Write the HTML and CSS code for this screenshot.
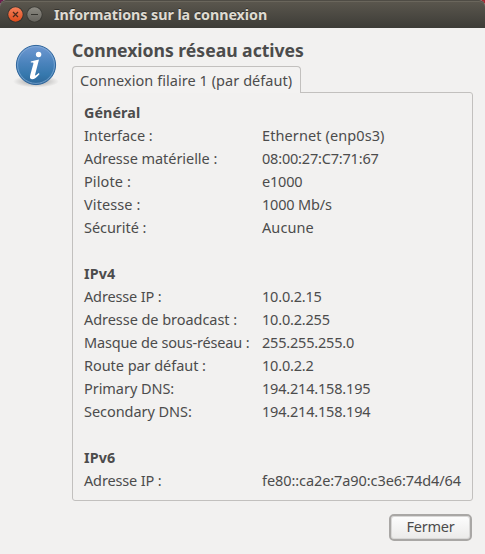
FILE: index.html
```html
<!DOCTYPE html>
<html lang="fr">
<head>
<meta charset="utf-8">
<title>Informations sur la connexion</title>
<link rel="stylesheet" href="styles.css">
</head>
<body>
<div class="window">
  <header class="titlebar">
    <svg class="controls" width="44" height="28" viewBox="0 0 44 28">
      <defs>
        <linearGradient id="close" x1="0" y1="0" x2="0" y2="1"><stop offset="0" stop-color="#f4805a"/><stop offset="1" stop-color="#df4c1c"/></linearGradient>
        <linearGradient id="mini" x1="0" y1="0" x2="0" y2="1"><stop offset="0" stop-color="#8c8a82"/><stop offset="1" stop-color="#66645e"/></linearGradient>
      </defs>
      <circle cx="15.5" cy="14.5" r="8.1" fill="#35342f"/>
      <circle cx="15.5" cy="14.5" r="7.2" fill="url(#close)"/>
      <path d="M13 12l5 5M18 12l-5 5" stroke="#4a2a1c" stroke-width="1.2"/>
      <circle cx="34.5" cy="14.5" r="8.1" fill="#3a3934"/>
      <circle cx="34.5" cy="14.5" r="7.2" fill="url(#mini)"/>
      <path d="M31 14.5h7" stroke="#35342f" stroke-width="1.2"/>
    </svg>
    <h1 class="caption">Informations sur la connexion</h1>
  </header>
  <main class="content">
    <svg class="info" width="46" height="46" viewBox="0 0 46 46">
      <defs>
        <linearGradient id="ball" x1="0" y1="0" x2="0" y2="1"><stop offset="0" stop-color="#7099d2"/><stop offset=".45" stop-color="#4a83bc"/><stop offset=".75" stop-color="#3678ad"/><stop offset="1" stop-color="#2d6698"/></linearGradient>
        <radialGradient id="shade"><stop offset="0" stop-color="#000" stop-opacity=".35"/><stop offset="1" stop-color="#000" stop-opacity="0"/></radialGradient>
      </defs>
      <ellipse cx="23" cy="38.5" rx="23" ry="6" fill="url(#shade)"/>
      <circle cx="23" cy="22" r="19.6" fill="url(#ball)" stroke="#2e659c" stroke-width="1"/>
      <circle cx="23" cy="22" r="18.4" fill="none" stroke="#8db4dc" stroke-opacity=".65" stroke-width="1"/>
      <circle cx="25.6" cy="11.5" r="2.7" fill="#fff"/>
      <path d="M17.8 18.4C20.2 17.6 23 17 26 16.4L22.2 31.2C21.7 33.2 22.8 32.8 25.7 30L26.6 31C23.6 34.7 21.2 36.3 19 36.2C16.7 36.1 16.7 34.1 17.4 31.6L20.3 21C20.8 19.4 20 19.3 17.8 19.6Z" fill="#fff"/>
    </svg>
    <section class="details">
      <h2 class="heading">Connexions réseau actives</h2>
      <div class="tab">Connexion filaire 1 (par défaut)</div>
      <dl class="panel">
        <dt class="group">Général</dt>
        <dt>Interface :</dt><dd class="wide">Ethernet (enp0s3)</dd>
        <dt>Adresse matérielle :</dt><dd>08:00:27:C7:71:67</dd>
        <dt class="wide">Pilote :</dt><dd>e1000</dd>
        <dt class="wide">Vitesse :</dt><dd>1000 Mb/s</dd>
        <dt>Sécurité :</dt><dd class="wide">Aucune</dd>
        <dt class="group spaced">IPv4</dt>
        <dt class="tight">Adresse IP :</dt><dd>10.0.2.15</dd>
        <dt>Adresse de broadcast :</dt><dd>10.0.2.255</dd>
        <dt class="tight">Masque de sous-réseau :</dt><dd>255.255.255.0</dd>
        <dt>Route par défaut :</dt><dd>10.0.2.2</dd>
        <dt>Primary DNS:</dt><dd>194.214.158.195</dd>
        <dt>Secondary DNS:</dt><dd>194.214.158.194</dd>
        <dt class="group spaced">IPv6</dt>
        <dt class="tight">Adresse IP :</dt><dd class="address">fe80::ca2e:7a90:c3e6:74d4/64</dd>
      </dl>
    </section>
  </main>
  <footer class="actions"><button class="button" type="button">Fermer</button></footer>
</div>
</body>
</html>
```
FILE: styles.css
```css
* { box-sizing: border-box; }
body {
  margin: 0;
  background: linear-gradient(90deg, #6b1f4c 50%, #a32a33 50%);
  color: #4c4c4c;
  font: 14.5px/23px "Noto Sans", sans-serif;
}
.window {
  display: flex;
  flex-direction: column;
  height: 554px;
  background: #f2f1f0;
  border-radius: 6px 6px 0 0;
  overflow: hidden;
}
.titlebar {
  display: flex;
  height: 28px;
  background: linear-gradient(#5c584f, #3d3c37);
  border-radius: 6px 6px 0 0;
  box-shadow: inset 0 1px #4f4c45, inset 0 2px #6a665c;
}
.caption {
  margin: 0 0 0 10px;
  font-size: 14.3px;
  font-weight: 700;
  line-height: 29px;
  letter-spacing: -0.06px;
  color: #dfdbd2;
  text-shadow: 0 -1px #33322e;
}
.content {
  display: flex;
  gap: 13px;
  padding: 15px 12px 0 13px;
}
.info { flex: none; }
.details { flex: 1; }
.heading {
  margin: -4px 0 0;
  height: 27px;
  font-size: 17.6px;
  font-weight: 700;
  line-height: 23px;
  letter-spacing: -0.02px;
}
.tab {
  position: relative;
  width: 229px;
  height: 27px;
  padding: 0 0 0 7px;
  border: 1px solid #c2c0be;
  border-bottom: 0;
  border-radius: 4px 4px 0 0;
  background: #f3f2f1;
  line-height: 26px;
  letter-spacing: 0.05px;
}
.panel {
  display: grid;
  grid-template-columns: 178px 1fr;
  align-content: start;
  height: 409px;
  margin: -1px 0 0;
  padding: 8px 0 0 11px;
  border: 1px solid #c2c0be;
  border-radius: 0 3px 3px 3px;
  white-space: nowrap;
}
.panel dt { letter-spacing: -0.05px; }
.panel dd { margin: 0; letter-spacing: -0.19px; }
.panel .group { grid-column: 1 / -1; font-size: 14.3px; font-weight: 700; letter-spacing: 0.1px; }
.panel .spaced { margin-top: 23px; }
.panel .tight { letter-spacing: -0.15px; }
.panel .wide { letter-spacing: 0.1px; }
.panel .address { letter-spacing: -0.08px; }
.actions {
  display: flex;
  justify-content: flex-end;
  padding: 13px 13px 0 0;
}
.button {
  width: 83px;
  height: 27px;
  padding: 0 0 2px;
  border: 2px solid #a9a7a5;
  border-radius: 5px;
  background: linear-gradient(#fdfdfd, #ebeae9);
  box-shadow: inset 0 0 0 1px #d9d8d7;
  color: #4c4c4c;
  font: 14.5px/21px "Noto Sans", sans-serif;
  letter-spacing: -0.22px;
}
```
